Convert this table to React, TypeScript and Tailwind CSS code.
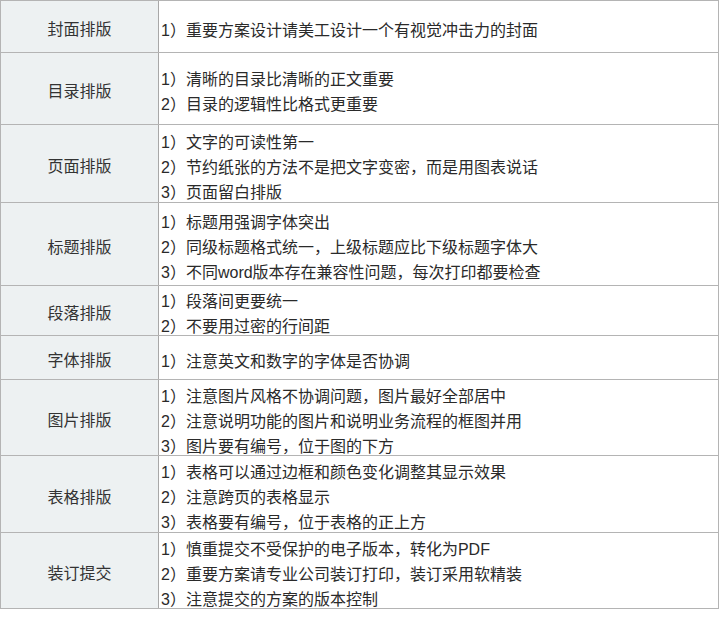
import React from "react";

const rows: { label: string; h: string; items: string[] }[] = [
  { label: "封面排版", h: "h-[52px]", items: ["重要方案设计请美工设计一个有视觉冲击力的封面"] },
  { label: "目录排版", h: "h-[72px]", items: ["清晰的目录比清晰的正文重要", "目录的逻辑性比格式更重要"] },
  { label: "页面排版", h: "h-[78px]", items: ["文字的可读性第一", "节约纸张的方法不是把文字变密，而是用图表说话", "页面留白排版"] },
  { label: "标题排版", h: "h-[83px]", items: ["标题用强调字体突出", "同级标题格式统一，上级标题应比下级标题字体大", "不同word版本存在兼容性问题，每次打印都要检查"] },
  { label: "段落排版", h: "h-[50px]", items: ["段落间更要统一", "不要用过密的行间距"] },
  { label: "字体排版", h: "h-[44px]", items: ["注意英文和数字的字体是否协调"] },
  { label: "图片排版", h: "h-[76px]", items: ["注意图片风格不协调问题，图片最好全部居中", "注意说明功能的图片和说明业务流程的框图并用", "图片要有编号，位于图的下方"] },
  { label: "表格排版", h: "h-[77px]", items: ["表格可以通过边框和颜色变化调整其显示效果", "注意跨页的表格显示", "表格要有编号，位于表格的正上方"] },
  { label: "装订提交", h: "h-[76px]", items: ["慎重提交不受保护的电子版本，转化为PDF", "重要方案请专业公司装订打印，装订采用软精装", "注意提交的方案的版本控制"] },
];

export default function App() {
  return (
    <div className="w-[720px] h-[618px] bg-white" style={{ fontFamily: '"Liberation Sans", "Noto Sans CJK SC", sans-serif' }}>
      <div className="w-[719px] border-t border-l border-r border-[#b4b4b4]">
        {rows.map((r) => (
          <div key={r.label} className={`flex border-b border-[#b4b4b4] ${r.h}`}>
            <div className="w-[158px] shrink-0 flex items-center justify-center bg-[#edf1f2] border-r border-[#a8a8a8] text-[16px] text-[#333333] pt-[7px]">
              {r.label}
            </div>
            <div className="flex-1 flex flex-col justify-center pl-[2px] pt-[7px] text-[16px] leading-[25px] text-[#2a2a2a]">
              {r.items.map((t, i) => (
                <div key={i} className="whitespace-nowrap">
                  {i + 1}）{t}
                </div>
              ))}
            </div>
          </div>
        ))}
      </div>
    </div>
  );
}
